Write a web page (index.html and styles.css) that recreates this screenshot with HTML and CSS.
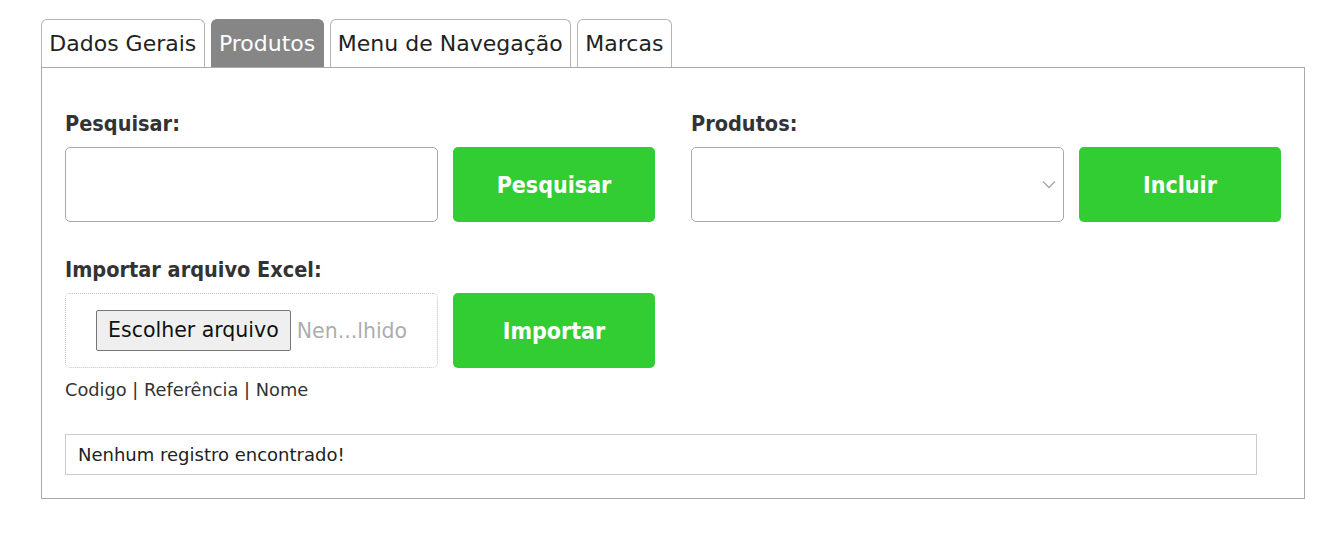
FILE: index.html
```html
<!DOCTYPE html>
<html lang="pt-BR">
<head>
<meta charset="utf-8">
<title>Produtos</title>
<link rel="stylesheet" href="styles.css">
</head>
<body>
<div class="page">
  <div class="tabs">
    <div class="tab">Dados Gerais</div>
    <div class="tab active">Produtos</div>
    <div class="tab">Menu de Navegação</div>
    <div class="tab">Marcas</div>
  </div>
  <div class="panel">
    <div class="grid">
      <div class="field">
        <label class="label">Pesquisar:</label>
        <div class="row">
          <div class="box"></div>
          <button class="btn">Pesquisar</button>
        </div>
      </div>
      <div class="field">
        <label class="label">Produtos:</label>
        <div class="row">
          <div class="box select">
            <svg class="chev" width="14" height="9" viewBox="0 0 14 9"><path d="M1 1.5 L7 7.5 L13 1.5" fill="none" stroke="#a8a8a8" stroke-width="1.4"/></svg>
          </div>
          <button class="btn">Incluir</button>
        </div>
      </div>
      <div class="field">
        <label class="label">Importar arquivo Excel:</label>
        <div class="row">
          <div class="box file">
            <span class="file-btn">Escolher arquivo</span>
            <span class="file-name">Nen...lhido</span>
          </div>
          <button class="btn">Importar</button>
        </div>
        <div class="hint">Codigo | Referência | Nome</div>
      </div>
    </div>
    <div class="msg">Nenhum registro encontrado!</div>
  </div>
</div>
</body>
</html>
```
FILE: styles.css
```css
* { box-sizing: border-box; }
body {
  margin: 0;
  background: #fff;
  font-family: "DejaVu Sans", "Noto Sans", sans-serif;
  color: #333;
}
.page {
  padding: 19px 34px 0 41px;
}
.tabs {
  display: flex;
  gap: 6px;
}
.tab {
  height: 48px;
  line-height: 47px;
  padding: 0 7.3px;
  border: 1px solid #b4b4b4;
  border-bottom: none;
  border-radius: 6px 6px 0 0;
  font-family: "DejaVu Sans", sans-serif;
  font-size: 22px;
  color: #222;
  background: #fff;
}
.tab.active {
  background: #868686;
  border-color: #868686;
  color: #fff;
}
.panel {
  border: 1px solid #aaa;
  padding: 42px 23px 23px 23px;
}
.grid {
  display: grid;
  grid-template-columns: 1fr 1fr;
  column-gap: 36px;
  row-gap: 34px;
}
.label {
  display: block;
  font-family: "DejaVu Sans Condensed", "DejaVu Sans", sans-serif;
  font-size: 21.5px;
  font-weight: 700;
  line-height: 27px;
  margin-bottom: 10px;
  color: #333;
}
.row {
  display: flex;
  gap: 15px;
  height: 75px;
}
.box {
  flex: 0 0 373px;
  border: 1px solid #aaa;
  border-radius: 5px;
  background: #fff;
}
.select {
  display: flex;
  align-items: center;
  justify-content: flex-end;
  padding-right: 7px;
}
.file {
  border: 1px dotted #c4c4c4;
  display: flex;
  align-items: center;
  padding-left: 30px;
  gap: 6px;
  overflow: hidden;
}
.file-btn {
  display: inline-block;
  flex: 0 0 auto;
  background: #efefef;
  border: 1px solid #767676;
  border-radius: 2px;
  height: 41px;
  line-height: 39px;
  padding: 0 11px;
  font-size: 20.5px;
  color: #111;
  white-space: nowrap;
}
.file-name {
  font-size: 20.5px;
  color: #adadad;
  white-space: nowrap;
}
.btn {
  flex: 1 1 auto;
  border: none;
  border-radius: 5px;
  background: #32cd32;
  color: #fff;
  font-family: "DejaVu Sans Condensed", "DejaVu Sans", sans-serif;
  font-size: 23px;
  font-weight: 700;
  cursor: pointer;
}
.hint {
  margin-top: 10px;
  line-height: 24px;
  font-size: 17.8px;
  color: #333;
}
.msg {
  margin-top: 32px;
  width: 98%;
  height: 41px;
  border: 1px solid #ccc;
  padding: 0 12px;
  line-height: 39px;
  font-size: 18px;
  color: #222;
}
```
